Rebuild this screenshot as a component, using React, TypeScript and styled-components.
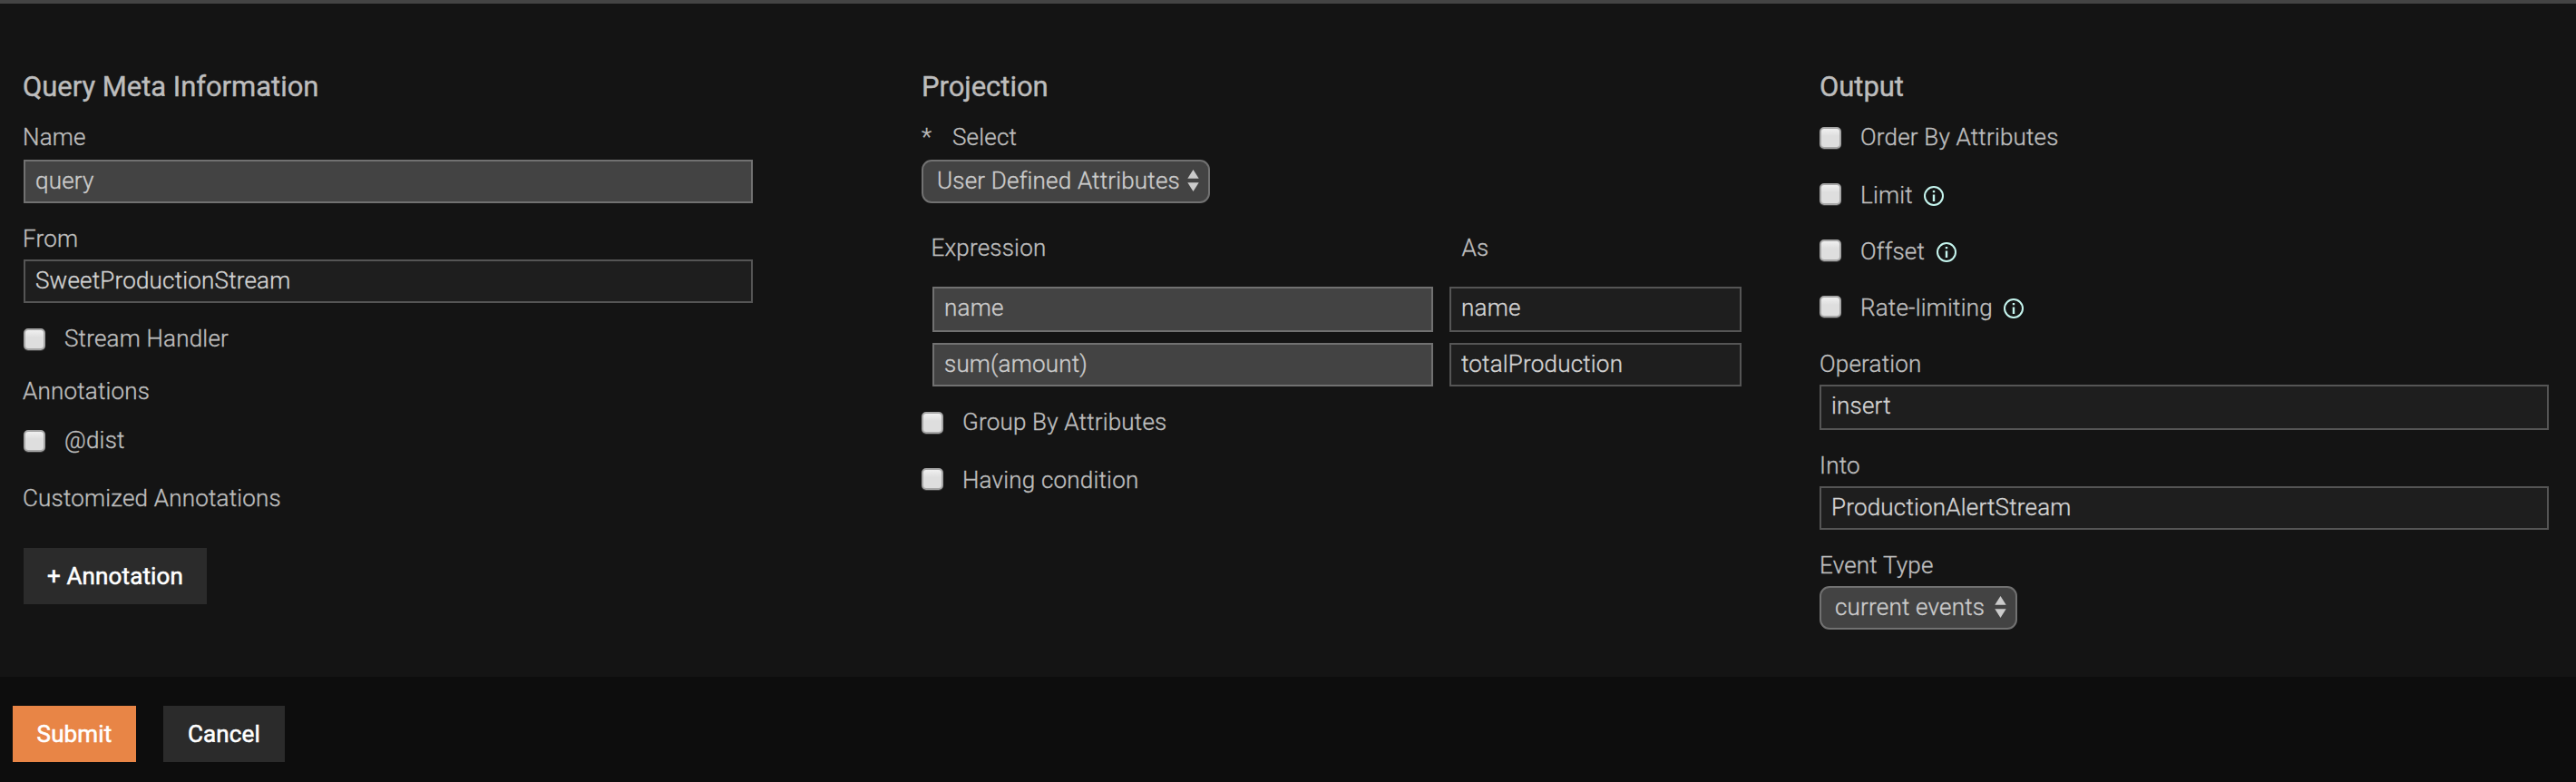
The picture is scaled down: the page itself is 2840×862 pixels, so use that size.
import React from 'react';
import styled, { createGlobalStyle } from 'styled-components';

const Global = createGlobalStyle`
  body { margin: 0; background: #0d0d0d; }
  *, *::before, *::after { box-sizing: border-box; }
`;

const Page = styled.div`
  height: 862px;
  font-family: Roboto, 'Liberation Sans', sans-serif;
  font-size: 26px;
  line-height: 30px;
  font-weight: 300;
  letter-spacing: 0.2px;
  color: #bdbdbd;
  -webkit-text-stroke: 0.35px;
`;

const Panel = styled.main`
  display: grid;
  grid-template-columns: 990px 990px 1fr;
  height: 746px;
  padding: 74px 30px 0 26px;
  background: #141414;
  border-top: 4px solid #444;
`;

const Column = styled.section<{ $indent?: number }>`
  display: flex;
  flex-direction: column;
  align-items: flex-start;
  text-indent: ${p => p.$indent ?? 0}px;
`;

const Heading = styled.h2`
  margin: 0 0 22px;
  font-size: 31px;
  line-height: 36px;
  font-weight: 400;
  letter-spacing: -0.04px;
  white-space: nowrap;
  -webkit-text-stroke: 0.4px;
`;

const Label = styled.div<{ $top?: number }>`
  margin-top: ${p => p.$top ?? 0}px;
  height: 30px;
  white-space: nowrap;
`;

const RequiredLabel = styled(Label)`
  display: flex;

  &::before {
    content: '*';
    width: 34px;
  }
`;

const Input = styled.input<{ $editable?: boolean; $width?: number; $height?: number; $top?: number }>`
  display: block;
  width: ${p => p.$width ?? 804}px;
  height: ${p => p.$height ?? 48}px;
  margin: ${p => p.$top ?? 0}px 0 0;
  padding: 6px 10px ${p => (p.$height ?? 48) - 40}px 11px;
  border: 2px solid ${p => (p.$editable ? '#717171' : '#555')};
  border-radius: 0;
  background: ${p => (p.$editable ? '#434343' : '#1e1e1e')};
  color: ${p => (p.$editable ? '#cbcbcb' : '#d2d2d2')};
  font: inherit;
  letter-spacing: inherit;
  outline: none;
`;

const SelectBox = styled.button<{ $width: number; $top: number }>`
  display: flex;
  align-items: center;
  justify-content: space-between;
  width: ${p => p.$width}px;
  height: 48px;
  margin: ${p => p.$top}px 0 0;
  padding: 0 10px 2px 15px;
  border: 2px solid #717171;
  border-radius: 11px;
  background: #434343;
  color: #cbcbcb;
  font: inherit;
  letter-spacing: inherit;
  white-space: nowrap;
`;

const Arrows = styled.svg`
  flex: none;
  width: 13px;
  height: 24px;
  fill: #cbcbcb;
`;

const CheckRow = styled.label<{ $top?: number }>`
  display: flex;
  align-items: flex-start;
  height: 30px;
  margin-top: ${p => p.$top ?? 0}px;
  text-indent: 0;
  white-space: nowrap;
`;

const Checkbox = styled.input.attrs({ type: 'checkbox' })<{ $drop?: number }>`
  appearance: none;
  flex: none;
  width: 24px;
  height: 24px;
  margin: ${p => p.$drop ?? 2}px 21px 0 0;
  border: 2px solid #a6a6a6;
  border-radius: 5px;
  background: linear-gradient(#f0f0f0, #dedede 40%, #dedede);
  box-shadow: 0 1px 0 #3c3c3c;
`;

const InfoIcon = styled.svg`
  width: 22px;
  height: 22px;
  margin: 5px 0 0 12.5px;
  color: #c5f5ee;
`;

const Grid = styled.div`
  display: grid;
  grid-template-columns: 552px 322px;
  column-gap: 18px;
  row-gap: 12px;
  margin: 28px 0 0 12px;
`;

const GridHead = styled.div`
  display: grid;
  grid-template-columns: 585px 1fr;
  margin: 34px 0 0 10.5px;
`;

const Button = styled.button<{ $width: number; $primary?: boolean; $top?: number }>`
  width: ${p => p.$width}px;
  height: 62px;
  margin: ${p => p.$top ?? 0}px 0 0;
  padding: 0;
  border: 0;
  background: ${p => (p.$primary ? '#e88546' : '#2b2b2b')};
  color: #fff;
  font: inherit;
  font-weight: 400;
  letter-spacing: 0.15px;
  -webkit-text-stroke: 0.55px;
`;

const Footer = styled.footer`
  display: flex;
  gap: 30px;
  height: 112px;
  padding: 32px 14px 0;
`;

const UpDown = () => (
  <Arrows viewBox="0 0 13 24">
    <path d="M6.5 0 12.7 9.7H0.3Z M0.3 14.3H12.7L6.5 24Z" />
  </Arrows>
);

const Info = () => (
  <InfoIcon viewBox="0 0 22 22" fill="none" stroke="currentColor" strokeWidth="2">
    <circle cx="11" cy="11" r="10" />
    <path d="M11 9.5V17M11 5V7.3" strokeWidth="2.4" />
  </InfoIcon>
);

type OptionProps = { label: string; top?: number; drop?: number; info?: boolean };

const Option = ({ label, top, drop, info }: OptionProps) => (
  <CheckRow $top={top}>
    <Checkbox $drop={drop} />
    {label}
    {info && <Info />}
  </CheckRow>
);

export default function App() {
  return (
    <Page>
      <Global />
      <Panel>
        <Column $indent={-1}>
          <Heading>Query Meta Information</Heading>
          <Label>Name</Label>
          <Input $editable $top={10} defaultValue="query" />
          <Label $top={24}>From</Label>
          <Input $top={8} readOnly value="SweetProductionStream" />
          <Option label="Stream Handler" top={24} drop={4} />
          <Label $top={28}>Annotations</Label>
          <Option label="@dist" top={24} drop={4} />
          <Label $top={34}>Customized Annotations</Label>
          <Button $width={202} $top={40}>+ Annotation</Button>
        </Column>

        <Column>
          <Heading>Projection</Heading>
          <RequiredLabel>Select</RequiredLabel>
          <SelectBox $width={318} $top={10}>
            User Defined Attributes
            <UpDown />
          </SelectBox>
          <GridHead>
            <Label>Expression</Label>
            <Label>As</Label>
          </GridHead>
          <Grid>
            <Input $editable $width={552} $height={50} defaultValue="name" />
            <Input $width={322} $height={50} readOnly value="name" />
            <Input $editable $width={552} defaultValue="sum(amount)" />
            <Input $width={322} readOnly value="totalProduction" />
          </Grid>
          <Option label="Group By Attributes" top={24} drop={4} />
          <Option label="Having condition" top={34} />
        </Column>

        <Column>
          <Heading>Output</Heading>
          <Option label="Order By Attributes" drop={4} />
          <Option label="Limit" top={34} info />
          <Option label="Offset" top={32} info />
          <Option label="Rate-limiting" top={32} info />
          <Label $top={32}>Operation</Label>
          <Input $top={8} $height={50} readOnly value="insert" />
          <Label $top={24}>Into</Label>
          <Input $top={8} readOnly value="ProductionAlertStream" />
          <Label $top={24}>Event Type</Label>
          <SelectBox $width={218} $top={8}>
            current events
            <UpDown />
          </SelectBox>
        </Column>
      </Panel>
      <Footer>
        <Button $primary $width={136}>Submit</Button>
        <Button $width={134}>Cancel</Button>
      </Footer>
    </Page>
  );
}
